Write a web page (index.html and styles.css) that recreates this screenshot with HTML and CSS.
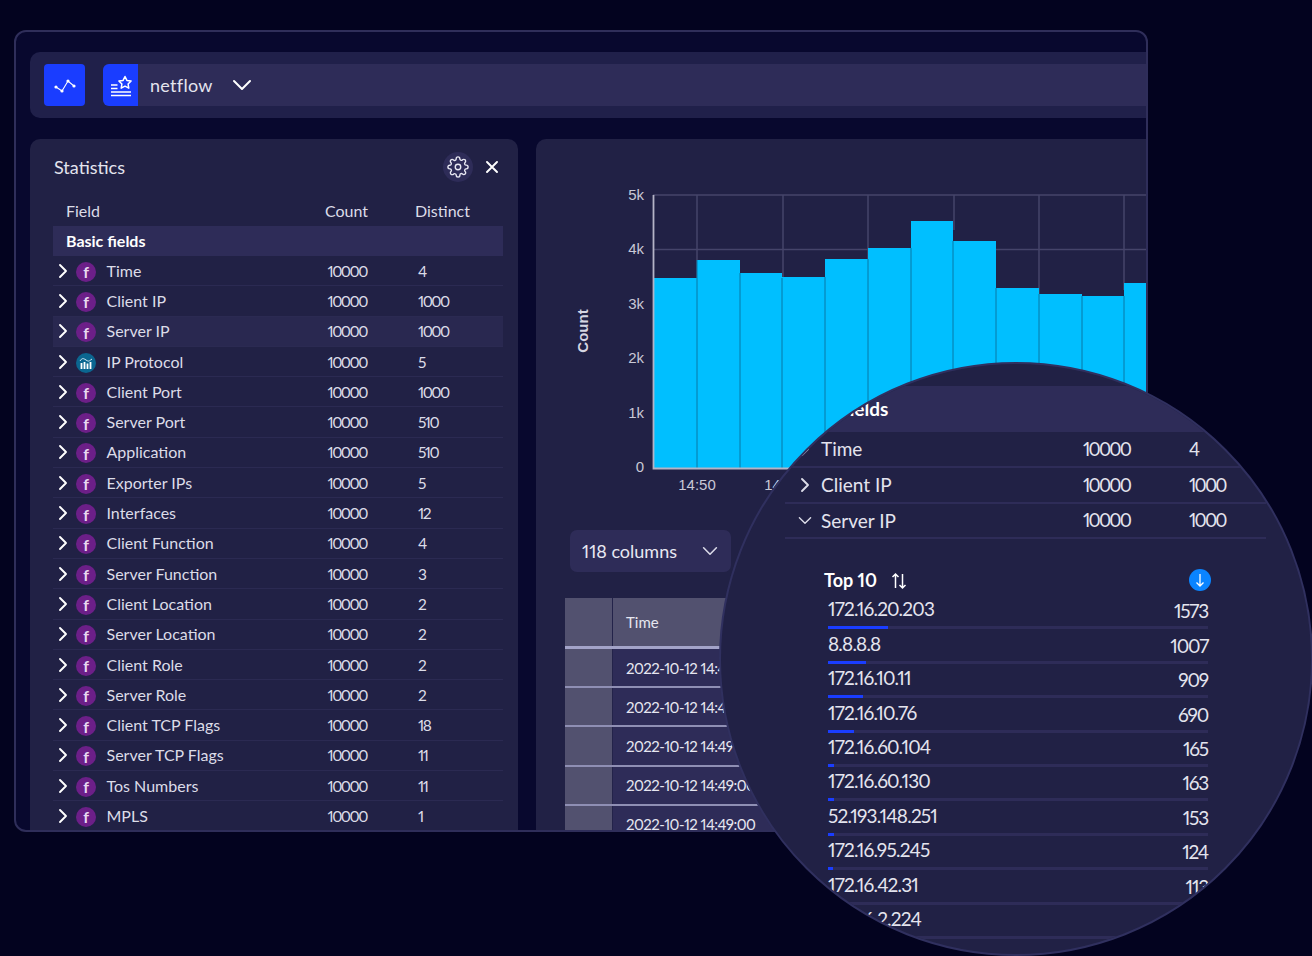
FILE: index.html
```html
<!DOCTYPE html>
<html lang="en">
<head>
    <meta charset="UTF-8">
    <title>netflow statistics</title>
    <link rel="stylesheet" href="styles.css">
</head>
<body>
    <svg class="defs" width="0" height="0">
        <symbol id="chev-right" viewBox="0 0 12 16"><path d="M3 2l6 6-6 6" fill="none" stroke="currentColor" stroke-width="1.9" stroke-linecap="round" stroke-linejoin="round"/></symbol>
        <symbol id="chev-down" viewBox="0 0 20 12"><path d="M2 2l8 8 8-8" fill="none" stroke="currentColor" stroke-width="2" stroke-linecap="round" stroke-linejoin="round"/></symbol>
    </svg>

    <div class="frame">
        <div class="topbar">
            <button class="mode-btn">
                <svg width="24" height="24" viewBox="0 0 24 24"><polyline points="3,15 9,19 15,9 21,14" fill="none" stroke="#fff" stroke-width="1.100"/><circle cx="3" cy="15" r="1.600" fill="#fff"/><circle cx="9" cy="19" r="1.600" fill="#fff"/><circle cx="15" cy="9" r="1.600" fill="#fff"/><circle cx="21" cy="14" r="1.600" fill="#fff"/></svg>
            </button>
            <div class="source">
                <span class="source-ic">
                    <svg width="24" height="24" viewBox="0 0 24 24"><path d="M16 3.500l1.900 3.900 4.200.6-3 3 .7 4.200-3.800-2-3.800 2 .7-4.200-3-3 4.200-.6z" fill="none" stroke="#fff" stroke-width="1.500" stroke-linejoin="round"/><path d="M2 12h6.500M2 15.500h6.500M2 19h20M2 22.500h20" stroke="#fff" stroke-width="1.300"/></svg>
                </span>
                <span class="source-name">netflow</span>
                <svg class="source-chev" width="20" height="12"><use href="#chev-down"/></svg>
            </div>
        </div>

        <div class="panels">
            <section class="stats">
                <div class="stats-head">
                    <h2>Statistics</h2>
                    <span class="gear">
                        <svg width="22" height="22" viewBox="0 0 24 24" fill="none" stroke="currentColor" stroke-width="1.500"><circle cx="12" cy="12" r="3"/><path d="M19.400 15a1.650 1.650 0 0 0 .33 1.820l.06.06a2 2 0 0 1 0 2.830 2 2 0 0 1-2.830 0l-.06-.06a1.650 1.650 0 0 0-1.820-.33 1.650 1.650 0 0 0-1 1.510V21a2 2 0 0 1-2 2 2 2 0 0 1-2-2v-.09A1.650 1.650 0 0 0 9 19.400a1.650 1.650 0 0 0-1.820.33l-.06.06a2 2 0 0 1-2.830 0 2 2 0 0 1 0-2.830l.06-.06a1.650 1.650 0 0 0 .33-1.820 1.650 1.650 0 0 0-1.510-1H3a2 2 0 0 1-2-2 2 2 0 0 1 2-2h.09A1.650 1.650 0 0 0 4.600 9a1.650 1.650 0 0 0-.33-1.820l-.06-.06a2 2 0 0 1 0-2.830 2 2 0 0 1 2.830 0l.06.06a1.650 1.650 0 0 0 1.820.33H9a1.650 1.650 0 0 0 1-1.510V3a2 2 0 0 1 2-2 2 2 0 0 1 2 2v.09a1.650 1.650 0 0 0 1 1.510 1.650 1.650 0 0 0 1.820-.33l.06-.06a2 2 0 0 1 2.830 0 2 2 0 0 1 0 2.830l-.06.06a1.650 1.650 0 0 0-.33 1.820V9a1.650 1.650 0 0 0 1.510 1H21a2 2 0 0 1 2 2 2 2 0 0 1-2 2h-.09a1.650 1.650 0 0 0-1.510 1z"/></svg>
                    </span>
                    <svg class="close" width="12" height="12" viewBox="0 0 12 12"><path d="M1 1l10 10M11 1L1 11" stroke="#fff" stroke-width="1.900" stroke-linecap="round"/></svg>
                </div>
                <div class="col-head">
                    <span class="col-field">Field</span>
                    <span class="col-count">Count</span>
                    <span class="col-distinct">Distinct</span>
                </div>
                <div class="band">Basic fields</div>
                <div class="row"><svg class="chev" width="12" height="16"><use href="#chev-right"/></svg><span class="type">f</span><span class="name">Time</span><span class="count">10000</span><span class="distinct">4</span></div>
                <div class="row"><svg class="chev" width="12" height="16"><use href="#chev-right"/></svg><span class="type">f</span><span class="name">Client IP</span><span class="count">10000</span><span class="distinct">1000</span></div>
                <div class="row row-hover"><svg class="chev" width="12" height="16"><use href="#chev-right"/></svg><span class="type">f</span><span class="name">Server IP</span><span class="count">10000</span><span class="distinct">1000</span></div>
                <div class="row"><svg class="chev" width="12" height="16"><use href="#chev-right"/></svg><span class="type type-num"><svg width="14" height="14" viewBox="0 0 14 14"><path d="M1 5c2-3 3-3 6-1s3 1 6-1" fill="none" stroke="#cfe9f5" stroke-width="1"/><path d="M2.500 7v6M5.500 6v7M8.500 7.500V13M11.500 6v7" stroke="#fff" stroke-width="1.800"/></svg></span><span class="name">IP Protocol</span><span class="count">10000</span><span class="distinct">5</span></div>
                <div class="row"><svg class="chev" width="12" height="16"><use href="#chev-right"/></svg><span class="type">f</span><span class="name">Client Port</span><span class="count">10000</span><span class="distinct">1000</span></div>
                <div class="row"><svg class="chev" width="12" height="16"><use href="#chev-right"/></svg><span class="type">f</span><span class="name">Server Port</span><span class="count">10000</span><span class="distinct">510</span></div>
                <div class="row"><svg class="chev" width="12" height="16"><use href="#chev-right"/></svg><span class="type">f</span><span class="name">Application</span><span class="count">10000</span><span class="distinct">510</span></div>
                <div class="row"><svg class="chev" width="12" height="16"><use href="#chev-right"/></svg><span class="type">f</span><span class="name">Exporter IPs</span><span class="count">10000</span><span class="distinct">5</span></div>
                <div class="row"><svg class="chev" width="12" height="16"><use href="#chev-right"/></svg><span class="type">f</span><span class="name">Interfaces</span><span class="count">10000</span><span class="distinct">12</span></div>
                <div class="row"><svg class="chev" width="12" height="16"><use href="#chev-right"/></svg><span class="type">f</span><span class="name">Client Function</span><span class="count">10000</span><span class="distinct">4</span></div>
                <div class="row"><svg class="chev" width="12" height="16"><use href="#chev-right"/></svg><span class="type">f</span><span class="name">Server Function</span><span class="count">10000</span><span class="distinct">3</span></div>
                <div class="row"><svg class="chev" width="12" height="16"><use href="#chev-right"/></svg><span class="type">f</span><span class="name">Client Location</span><span class="count">10000</span><span class="distinct">2</span></div>
                <div class="row"><svg class="chev" width="12" height="16"><use href="#chev-right"/></svg><span class="type">f</span><span class="name">Server Location</span><span class="count">10000</span><span class="distinct">2</span></div>
                <div class="row"><svg class="chev" width="12" height="16"><use href="#chev-right"/></svg><span class="type">f</span><span class="name">Client Role</span><span class="count">10000</span><span class="distinct">2</span></div>
                <div class="row"><svg class="chev" width="12" height="16"><use href="#chev-right"/></svg><span class="type">f</span><span class="name">Server Role</span><span class="count">10000</span><span class="distinct">2</span></div>
                <div class="row"><svg class="chev" width="12" height="16"><use href="#chev-right"/></svg><span class="type">f</span><span class="name">Client TCP Flags</span><span class="count">10000</span><span class="distinct">18</span></div>
                <div class="row"><svg class="chev" width="12" height="16"><use href="#chev-right"/></svg><span class="type">f</span><span class="name">Server TCP Flags</span><span class="count">10000</span><span class="distinct">11</span></div>
                <div class="row"><svg class="chev" width="12" height="16"><use href="#chev-right"/></svg><span class="type">f</span><span class="name">Tos Numbers</span><span class="count">10000</span><span class="distinct">11</span></div>
                <div class="row"><svg class="chev" width="12" height="16"><use href="#chev-right"/></svg><span class="type">f</span><span class="name">MPLS</span><span class="count">10000</span><span class="distinct">1</span></div>
            </section>

            <section class="main">
                <svg class="chart" width="611" height="370" viewBox="536 139 611 370">
                    <g stroke="#45446a" stroke-width="1.500">
                        <path d="M653 195H1147M653 249.500H1147M697 195V280M783 195V280M868 195V280M954 195V230M1039 195V300M1124 195V290"/>
                    </g>
                    <g fill="#00bfff">
                        <rect x="654" y="278" width="43" height="190"/>
                        <rect x="697" y="260" width="43" height="208"/>
                        <rect x="740" y="273" width="42" height="195"/>
                        <rect x="782" y="277" width="43" height="191"/>
                        <rect x="825" y="259" width="43" height="209"/>
                        <rect x="868" y="248" width="43" height="220"/>
                        <rect x="911" y="221" width="42" height="247"/>
                        <rect x="953" y="241" width="43" height="227"/>
                        <rect x="996" y="288" width="43" height="180"/>
                        <rect x="1039" y="294" width="43" height="174"/>
                        <rect x="1082" y="296" width="42" height="172"/>
                        <rect x="1124" y="283" width="30" height="185"/>
                    </g>
                    <path d="M697 260V468M740 273V468M782 278V468M825 277V468M868 259V468M911 248V468M953 241V468M996 288V468M1039 294V468M1082 296V468M1124 296V468" fill="none" stroke="#0878a6" stroke-width="1"/>
                    <path d="M653.500 195V468.500H1147" fill="none" stroke="#b4b3c6" stroke-width="1.800"/>
                    <g class="tick" text-anchor="end">
                        <text x="644" y="200">5k</text>
                        <text x="644" y="254">4k</text>
                        <text x="644" y="309">3k</text>
                        <text x="644" y="363">2k</text>
                        <text x="644" y="418">1k</text>
                        <text x="644" y="472">0</text>
                    </g>
                    <g class="tick" text-anchor="middle">
                        <text x="697" y="490">14:50</text>
                        <text x="783" y="490">14:55</text>
                    </g>
                    <text class="axis-title" transform="translate(588 331) rotate(-90)" text-anchor="middle">Count</text>
                </svg>
                <div class="col-picker">
                    <span>118 columns</span>
                    <svg width="16" height="10" viewBox="0 0 20 12"><use href="#chev-down"/></svg>
                </div>
                <div class="grid">
                    <div class="grid-row grid-head"><span class="idx"></span><span class="cell">Time</span></div>
                    <div class="grid-row"><span class="idx"></span><span class="cell">2022-10-12 14:49:00</span></div>
                    <div class="grid-row"><span class="idx"></span><span class="cell">2022-10-12 14:49:00</span></div>
                    <div class="grid-row"><span class="idx"></span><span class="cell">2022-10-12 14:49:00</span></div>
                    <div class="grid-row"><span class="idx"></span><span class="cell">2022-10-12 14:49:00</span></div>
                    <div class="grid-row"><span class="idx"></span><span class="cell">2022-10-12 14:49:00</span></div>
                </div>
            </section>
        </div>
    </div>

    <!-- magnified part of the statistics panel -->
    <div class="lens">
        <div class="lens-band">Basic fields</div>
        <div class="lens-row"><svg class="lens-chev" width="12" height="16"><use href="#chev-right"/></svg><span class="lens-name">Time</span><span class="lens-count">10000</span><span class="lens-distinct">4</span></div>
        <div class="lens-row"><svg class="lens-chev" width="12" height="16"><use href="#chev-right"/></svg><span class="lens-name">Client IP</span><span class="lens-count">10000</span><span class="lens-distinct">1000</span></div>
        <div class="lens-row"><svg class="lens-chev" width="14" height="9" viewBox="0 0 20 12"><use href="#chev-down"/></svg><span class="lens-name">Server IP</span><span class="lens-count">10000</span><span class="lens-distinct">1000</span></div>
        <div class="top-head">
            <span class="top-title">Top 10</span>
            <svg class="sort" width="16" height="18" viewBox="0 0 16 18" fill="none" stroke="#fff" stroke-width="1.500"><path d="M4.500 16V2M1.500 5l3-3 3 3M11.500 2v14M8.500 13l3 3 3-3"/></svg>
            <span class="dl">
                <svg width="12" height="14" viewBox="0 0 12 14" fill="none" stroke="#fff" stroke-width="1.300"><path d="M6 1v12M2.500 9.500L6 13l3.500-3.500"/></svg>
            </span>
        </div>
        <div class="top-list">
            <div class="top-item"><div class="top-line"><span>172.16.20.203</span><span class="top-num">1573</span></div><div class="track"><div class="fill" style="width:15.800%"></div></div></div>
            <div class="top-item"><div class="top-line"><span>8.8.8.8</span><span class="top-num">1007</span></div><div class="track"><div class="fill" style="width:10.100%"></div></div></div>
            <div class="top-item"><div class="top-line"><span>172.16.10.11</span><span class="top-num">909</span></div><div class="track"><div class="fill" style="width:9.100%"></div></div></div>
            <div class="top-item"><div class="top-line"><span>172.16.10.76</span><span class="top-num">690</span></div><div class="track"><div class="fill" style="width:6.900%"></div></div></div>
            <div class="top-item"><div class="top-line"><span>172.16.60.104</span><span class="top-num">165</span></div><div class="track"><div class="fill" style="width:1.650%"></div></div></div>
            <div class="top-item"><div class="top-line"><span>172.16.60.130</span><span class="top-num">163</span></div><div class="track"><div class="fill" style="width:1.630%"></div></div></div>
            <div class="top-item"><div class="top-line"><span>52.193.148.251</span><span class="top-num">153</span></div><div class="track"><div class="fill" style="width:1.530%"></div></div></div>
            <div class="top-item"><div class="top-line"><span>172.16.95.245</span><span class="top-num">124</span></div><div class="track"><div class="fill" style="width:1.240%"></div></div></div>
            <div class="top-item"><div class="top-line"><span>172.16.42.31</span><span class="top-num">113</span></div><div class="track"></div></div>
            <div class="top-item"><div class="top-line"><span>172.16.2.224</span><span class="top-num">104</span></div><div class="track"></div></div>
        </div>
    </div>
</body>
</html>
```

FILE: styles.css
```css
* { box-sizing: border-box; }

html, body {
    margin: 0;
    height: 956px;
    overflow: hidden;
}

body {
    position: relative;
    background: #03031f;
    font-family: "Lato", "Noto Sans", sans-serif;
    font-variant-numeric: proportional-nums;
    color: #e4e4ee;
    padding: 30px 0 0 14px;
}

.defs { position: absolute; }

.frame {
    width: 1134px;
    height: 802px;
    padding: 20px 0 0 14px;
    background: #08082e;
    border: 2px solid #2f2e5a;
    border-radius: 12px;
    overflow: hidden;
}

.topbar {
    display: flex;
    align-items: center;
    gap: 18px;
    height: 66px;
    padding-left: 14px;
    background: #20204a;
    border-radius: 10px 0 0 10px;
}

.mode-btn {
    display: flex;
    align-items: center;
    justify-content: center;
    width: 41px;
    height: 42px;
    padding: 0 0 3px;
    background: #1a3dff;
    border: none;
    border-radius: 4px;
}

.source {
    flex: 1;
    display: flex;
    align-items: center;
    height: 42px;
    background: #2e2c58;
    border-radius: 6px 0 0 6px;
}

.source-ic {
    display: flex;
    align-items: center;
    justify-content: center;
    width: 35px;
    height: 42px;
    background: #1a3dff;
    border-radius: 6px 0 0 6px;
}

.source-name {
    margin-left: 12px;
    font-size: 18px;
    letter-spacing: 0.3px;
}

.source-chev {
    margin-left: 19px;
    color: #fff;
}

.panels {
    display: flex;
    gap: 18px;
    margin-top: 21px;
}

.stats, .main {
    height: 700px;
    background: #212145;
    border-radius: 10px 0 0 0;
    overflow: hidden;
}

.stats {
    width: 488px;
    padding: 0 15px 0 23px;
    border-radius: 10px 10px 0 0;
}

.main {
    flex: 1;
}

.stats-head {
    display: flex;
    align-items: center;
    height: 56px;
}

.stats-head h2 {
    flex: 1;
    margin: 0;
    font-size: 18px;
    font-weight: 400;
    padding-left: 1px;
}

.gear {
    display: flex;
    align-items: center;
    justify-content: center;
    width: 30px;
    height: 30px;
    margin-right: 13px;
    background: #2e2c58;
    border-radius: 50%;
    color: #e8e8f2;
}

.close { margin-right: 5px; }

.col-head {
    display: flex;
    align-items: center;
    height: 31px;
    font-size: 16px;
    color: #dcdce8;
}

.col-field { width: 272px; padding-left: 13px; }
.col-count { width: 90px; }

.band {
    display: flex;
    align-items: center;
    height: 30px;
    padding: 0 0 2px 13px;
    background: #2e2c58;
    font-size: 16px;
    font-weight: 700;
    color: #fff;
}

.row {
    display: flex;
    align-items: center;
    height: 30.3px;
    border-bottom: 1px solid #2b2a52;
    font-size: 16px;
    color: #dcdce8;
}

.row-hover { background: #292850; }

.chev {
    margin-left: 4px;
    color: #fff;
    flex: none;
}

.type {
    display: flex;
    align-items: center;
    justify-content: center;
    flex: none;
    width: 20px;
    height: 20px;
    margin: 2px 0 0 7px;
    background: #6c1f88;
    border-radius: 50%;
    font-size: 16px;
    font-weight: 700;
    color: #e8d8f0;
}

.type-num { background: #0b6690; }

.name {
    width: 221px;
    margin: -1px 0 0 10.5px;
}

.count, .distinct {
    font-size: 15.5px;
    letter-spacing: -1.5px;
}

.count { width: 90.5px; }

.chart { display: block; }

.tick text {
    font-family: "Liberation Sans", sans-serif;
    font-size: 15px;
    fill: #c8c8d6;
}

.axis-title {
    font-family: "Liberation Sans", sans-serif;
    font-size: 15px;
    font-weight: 700;
    fill: #d6d6e2;
}

.col-picker {
    display: flex;
    align-items: center;
    justify-content: space-between;
    width: 161px;
    height: 42px;
    margin: 21px 0 0 34px;
    padding: 0 13px 0 12px;
    background: #2e2c58;
    border-radius: 7px;
    font-size: 18px;
    color: #e8e8f2;
}

.col-picker svg { color: #d8d8e6; }

.grid {
    width: 320px;
    margin: 26px 0 0 29px;
}

.grid-row {
    display: flex;
    height: 39.2px;
    background: #2e2c58;
    border-bottom: 2px solid #8f8fb4;
    font-size: 15px;
    color: #e6e6f0;
}

.grid-head {
    height: 51px;
    background: #52516f;
    border-bottom: 3px solid #a3a3c8;
}

.idx {
    width: 48px;
    margin-right: 1px;
    background: #52516f;
    border-right: 1px solid #23234a;
}

.cell {
    display: flex;
    align-items: center;
    padding-left: 12px;
    white-space: nowrap;
    letter-spacing: -0.55px;
}

.grid-head .cell { letter-spacing: 0; }

/* lens */
.lens {
    position: absolute;
    left: 719px;
    top: 362px;
    width: 594px;
    height: 594px;
    padding-top: 22px;
    background: #212145;
    border: 2px solid #30305f;
    border-radius: 50%;
    overflow: hidden;
}

.lens-band {
    height: 46px;
    padding: 11px 0 0 73px;
    background: #2e2c58;
    font-size: 19px;
    font-weight: 700;
    color: #fff;
}

.lens-row {
    display: flex;
    align-items: center;
    width: 481px;
    height: 35.8px;
    margin-left: 64px;
    border-bottom: 2px solid #2e2c58;
    font-size: 19px;
    color: #e4e4ee;
}

.lens-chev {
    flex: none;
    width: 14px;
    margin-left: 13px;
    color: #dcdce8;
}

.lens-name {
    width: 262px;
    margin-left: 9px;
}

.lens-count, .lens-distinct {
    font-size: 18.5px;
    letter-spacing: -1.8px;
}

.lens-count { width: 106px; }

.top-head {
    position: relative;
    display: flex;
    align-items: center;
    gap: 14px;
    height: 24px;
    margin: 29px 0 0 103px;
}

.top-title {
    font-size: 18px;
    font-weight: 700;
    color: #fff;
}

.sort { margin-top: 2px; }

.dl {
    position: absolute;
    left: 365px;
    top: 1px;
    display: flex;
    align-items: center;
    justify-content: center;
    width: 22px;
    height: 22px;
    background: #0a84ff;
    border-radius: 50%;
}

.top-list {
    width: 380px;
    margin: 3px 0 0 107px;
}

.top-item {
    height: 34.4px;
}

.top-line {
    display: flex;
    justify-content: space-between;
    height: 31px;
    padding-top: 2px;
    font-size: 19px;
    letter-spacing: -0.8px;
    color: #e4e4ee;
}

.top-num {
    padding-top: 2px;
    letter-spacing: -1.2px;
}

.track {
    height: 3px;
    background: #2e2c58;
}

.fill {
    height: 3px;
    background: #1a3dff;
}
```
